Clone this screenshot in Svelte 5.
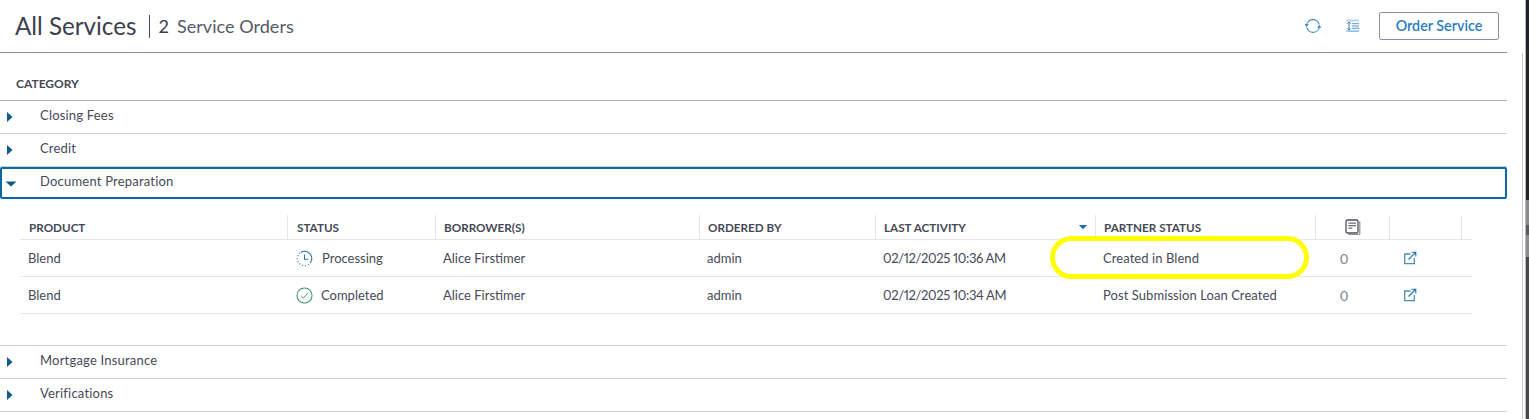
<script>
  const closedTop = ['Closing Fees', 'Credit'];
  const closedBottom = ['Mortgage Insurance', 'Verifications'];
  const rows = [
    { product: 'Blend', status: 'Processing', who: 'Alice Firstimer', by: 'admin', at: '02/12/2025 10:36 AM', partner: 'Created in Blend', n: 0 },
    { product: 'Blend', status: 'Completed', who: 'Alice Firstimer', by: 'admin', at: '02/12/2025 10:34 AM', partner: 'Post Submission Loan Created', n: 0 }
  ];
</script>

{#snippet caret()}
  <svg class="caret" width="8" height="12" viewBox="0 0 8 12"><path d="M1 1 6.5 6 1 11Z" fill="#0a5a8c"/></svg>
{/snippet}

{#snippet external()}
  <svg width="14" height="14" viewBox="0 0 14 14" fill="none">
    <path d="M7.5 3H1.7v9.6h9.6V6.8" stroke="#4f8db5" stroke-width="1.3"/>
    <path d="M5.5 8.5 12.5 1.5M8.6 1.2h4.2v4.2" stroke="#1f74ad" stroke-width="1.1"/>
  </svg>
{/snippet}

<div class="page">
  <main class="main">
    <header class="top">
      <h1>All Services</h1>
      <div class="count"><b>2</b><span>Service Orders</span></div>
      <div class="actions">
        <svg width="18" height="18" viewBox="0 0 18 18" fill="none" class="refresh">
          <path d="M2.6 8.2A6.4 6.4 0 0 1 15.2 7.6M15.4 9.8A6.4 6.4 0 0 1 2.8 10.4" stroke="#3a8bc4" stroke-width="1.1"/>
          <path d="M0.6 7.2h4L2.6 10ZM13.4 10.8h4L15.4 8Z" fill="#2b7fbb"/>
        </svg>
        <svg width="14" height="14" viewBox="0 0 14 14" class="density">
          <rect x="0.5" y="0.5" width="12.5" height="2" fill="#b5d3e8"/>
          <rect x="0.5" y="11.5" width="12.5" height="1.2" fill="#6aa8d2"/>
          <path d="M3 3v8M1.4 4.6 3 3l1.6 1.6M1.4 9.4 3 11l1.6-1.6" stroke="#2b7fbb" stroke-width="1" fill="none"/>
          <path d="M6 4.7h7M6 7h7M6 9.3h7" stroke="#4f97c9" stroke-width="1"/>
        </svg>
        <button class="order">Order Service</button>
      </div>
    </header>

    <section class="accordion">
      <div class="cat-head">CATEGORY</div>
      {#each closedTop as name}
        <div class="cat">{@render caret()}<span>{name}</span></div>
      {/each}

      <div class="cat open">
        <svg class="caret down" width="12" height="8" viewBox="0 0 12 8"><path d="M0.5 1.5h11L6 6.6Z" fill="#0a5a8c"/></svg>
        <span>Document Preparation</span>
      </div>

      <div class="panel">
        <div class="table">
          <div class="row head">
            <div class="c">PRODUCT</div>
            <div class="c">STATUS</div>
            <div class="c">BORROWER(S)</div>
            <div class="c">ORDERED BY</div>
            <div class="c sort">LAST ACTIVITY
              <svg width="10" height="6" viewBox="0 0 10 6"><path d="M0.8 1h8.4L5 5.2Z" fill="#1f6fa5"/></svg>
            </div>
            <div class="c">PARTNER STATUS</div>
            <div class="c mid">
              <svg width="16" height="16" viewBox="0 0 16 16" fill="none">
                <rect x="1" y="1" width="12" height="13" rx="1.5" stroke="#4c4f56" stroke-width="1.3"/>
                <path d="M13.2 3h1.6v11.4a1 1 0 0 1-1 1H3.4" stroke="#8b8e94" stroke-width="1.2"/>
                <path d="M3.4 4.2h7.6M3.4 6.7h7.6M3.4 9.2h4" stroke="#6a6d73" stroke-width="1.3"/>
              </svg>
            </div>
            <div class="c"></div>
            <div class="c"></div>
          </div>
          {#each rows as r}
            <div class="row body">
              <div class="c">{r.product}</div>
              <div class="c st">
                {#if r.status === 'Processing'}
                  <svg class="si" width="17" height="17" viewBox="0 0 18 18" fill="none">
                    <path d="M5 2.6A7.6 7.6 0 0 1 15.6 12.8" stroke="#2f6f9f" stroke-width="1.1"/>
                    <path d="M15.6 12.8A7.6 7.6 0 1 1 5 2.6" stroke="#2f6f9f" stroke-width="1.2" stroke-dasharray="1 2.2"/>
                    <path d="M9 4.8v5h4" stroke="#2f6f9f" stroke-width="1.1"/>
                  </svg>
                  <span class="pr">{r.status}</span>
                {:else}
                  <svg class="si" width="17" height="17" viewBox="0 0 18 18" fill="none">
                    <circle cx="9" cy="9" r="8" stroke="#3d8f78" stroke-width="1.1"/>
                    <path d="M5.4 9.3 8 11.8 12.6 6.4" stroke="#3d8f78" stroke-width="1"/>
                  </svg>
                  <span>{r.status}</span>
                {/if}
              </div>
              <div class="c">{r.who}</div>
              <div class="c">{r.by}</div>
              <div class="c date">{r.at}</div>
              <div class="c partner">{r.partner}</div>
              <div class="c num">{r.n}</div>
              <div class="c link">{@render external()}</div>
              <div class="c"></div>
            </div>
          {/each}
          <div class="mark"></div>
        </div>
      </div>

      {#each closedBottom as name}
        <div class="cat">{@render caret()}<span>{name}</span></div>
      {/each}
    </section>
  </main>
  <div class="rail">
    <div class="track"></div>
    <div class="sliver"></div>
    <div class="edge"></div>
  </div>
</div>

<style>
  :global(body) { margin: 0; background: #fff; }
  .page {
    display: flex;
    width: 1529px;
    height: 419px;
    overflow: hidden;
    font-family: Lato, "Open Sans", sans-serif;
    color: #454a56;
    font-size: 13px;
  }
  .main { width: 1507px; flex: none; }
  .rail { flex: 1; display: flex; justify-content: flex-end; }
  .track { width: 1px; margin-top: 53px; margin-right: 2px; background: #c9cdd8; }
  .sliver { width: 1px; background: #b9bcc6; }
  .edge {
    width: 3px;
    background: linear-gradient(#222226 0 200px, #8a8a8a 200px 225px, #5a5a5a 225px 235px, #8c8c8c 235px 257px, #4b4744 257px);
  }

  .top {
    height: 52px;
    border-bottom: 1px solid #8b90a3;
    display: flex;
    align-items: center;
    padding-left: 15px;
    padding-right: 8px;
  }
  h1 {
    margin: -2px 0 0;
    font-size: 24.2px;
    font-weight: 400;
    color: #3a404d;
    padding-right: 13px;
  }
  .count {
    display: flex;
    align-items: center;
    gap: 8px;
    height: 23px;
    border-left: 1px solid #454a56;
    padding-left: 8px;
    font-size: 18px;
    color: #555a66;
  }
  .count b { font-weight: 400; color: #3a404d; }
  .count span { letter-spacing: 0.05px; }
  .actions { margin-left: auto; display: flex; align-items: center; }
  .refresh { margin-right: 24px; }
  .density { margin-right: 19px; }
  .order {
    width: 120px;
    height: 28px;
    border: 1px solid #8b90a8;
    border-radius: 2px;
    background: #fff;
    color: #2a7cc0;
    font: 600 14.3px Lato, sans-serif;
    padding: 0 0 2px;
  }

  .accordion { padding-top: 15px; }
  .cat-head {
    height: 33px;
    box-sizing: border-box;
    padding: 8px 0 0 16px;
    font-size: 12px;
    font-weight: 700;
    color: #454a56;
    border-bottom: 1px solid #a8b0c4;
  }
  .cat {
    height: 33px;
    box-sizing: border-box;
    display: flex;
    align-items: center;
    padding-bottom: 5px;
    border-bottom: 1px solid #cdd0da;
    letter-spacing: 0.2px;
  }
  .cat span { margin-left: 29px; }
  .caret { margin-left: 6px; flex: none; margin-top: 5px; margin-right: -3px; }
  .cat.open {
    height: 32px;
    border: 2px solid #0a69a5;
    border-radius: 2px;
    padding-bottom: 4px;
  }
  .caret.down { margin-left: 3px; margin-right: -4px; }
  .cat.open span { margin-left: 27px; }

  .panel {
    height: 147px;
    padding: 16px 0 0 20px;
    box-sizing: border-box;
    border-bottom: 1px solid #cdd0da;
  }
  .table { position: relative; width: 1452px; }
  .row {
    display: grid;
    grid-template-columns: 268px 148px 264px 176px 220px 220px 74px 72px 10px;
    border-bottom: 1px solid #e4e6ea;
  }
  .head { height: 25px; box-sizing: border-box; font-size: 11.7px; font-weight: 700; color: #454a56; }
  .head .c {
    border-right: 1px solid #e4e6ea;
    padding-left: 8px;
    display: flex;
    align-items: center;
  }
  .head .c:first-child { padding-left: 9px; }
  .head .c:nth-child(2) { padding-left: 9px; }
  .head .c:last-child { border-right: 0; }
  .head .mid { justify-content: center; padding-left: 1px; }
  .sort { justify-content: space-between; padding-right: 7px; }
  .body { height: 37px; box-sizing: border-box; }
  .body .c {
    display: flex;
    align-items: center;
    padding-left: 7px;
  }
  .body .c:first-child, .body .st { padding-left: 8px; }
  .st { gap: 8px; }
  .si { flex: none; }
  .pr { margin-left: 1px; }
  .date { font-variant-numeric: proportional-nums; letter-spacing: -0.35px; }
  .partner { letter-spacing: 0.07px; }
  .num { color: #7d8494; font-size: 14px; padding-left: 24px !important; }
  .link { padding-left: 13px !important; }
  .mark {
    position: absolute;
    left: 1030px;
    top: 21px;
    width: 259px;
    height: 43px;
    box-sizing: border-box;
    border: 5px solid #ffff00;
    border-radius: 22px;
    pointer-events: none;
  }
</style>
